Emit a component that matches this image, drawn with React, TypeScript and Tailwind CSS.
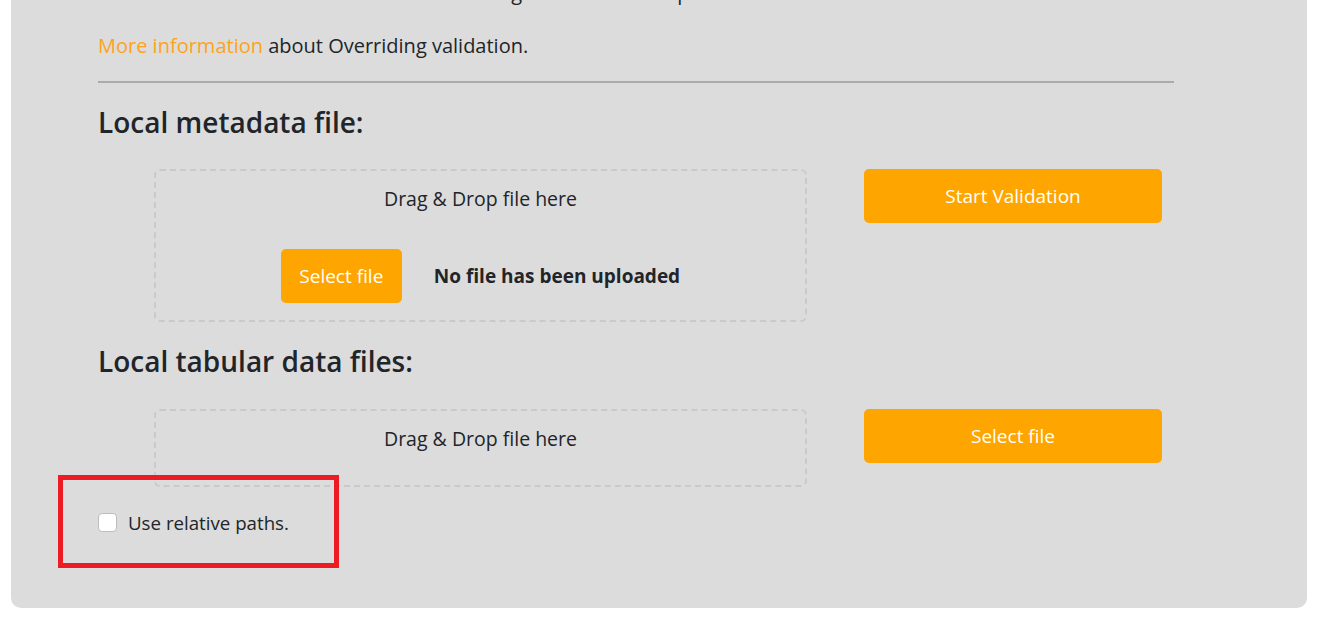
export default function App() {
  return (
    <div className="relative min-h-[618px] overflow-hidden bg-white font-['Open_Sans',sans-serif] text-[#212529]">
      <div className="ml-[11px] mr-[17px] -mt-[22px] rounded-[10px] bg-[#dcdcdc] pb-[72px] pl-[87px]">
        <p className="whitespace-nowrap text-[20px] leading-[30px]">
          Note that all of the validation checks will be ignored and the input is stored.
        </p>
        <p className="mt-[23px] text-[20px] leading-[30px]">
          <a className="text-[#ffa31a]">More information</a> about Overriding validation.
        </p>
        <hr className="mt-[20px] w-[1076px] border-0 border-t-2 border-[#ababab]" />
        <h3 className="mt-[22px] text-[28px] font-semibold leading-[34px]">Local metadata file:</h3>
        <div className="mt-[30px] flex items-start">
          <div className="ml-[56px] flex h-[153px] w-[653px] flex-col items-center rounded-[6px] border-2 border-dashed border-[#cacaca] pt-[14px]">
            <p className="text-[19.5px] leading-[27px]">Drag &amp; Drop file here</p>
            <div className="mt-[37px] flex items-center">
              <button className="h-[54px] w-[121px] rounded-[5px] bg-[#ffa500] text-[19px] text-white">
                Select file
              </button>
              <span className="ml-[32px] text-[19px] font-bold">No file has been uploaded</span>
            </div>
          </div>
          <button className="ml-[57px] h-[54px] w-[298px] rounded-[5px] bg-[#ffa500] text-[19px] text-white">
            Start Validation
          </button>
        </div>
        <h3 className="mt-[22px] text-[28px] font-semibold leading-[34px]">Local tabular data files:</h3>
        <div className="mt-[31px] flex items-start">
          <div className="ml-[56px] flex h-[78px] w-[653px] flex-col items-center rounded-[6px] border-2 border-dashed border-[#cacaca] pt-[14px]">
            <p className="text-[19.5px] leading-[27px]">Drag &amp; Drop file here</p>
          </div>
          <button className="ml-[57px] h-[54px] w-[298px] rounded-[5px] bg-[#ffa500] text-[19px] text-white">
            Select file
          </button>
        </div>
        <label className="mt-[22px] flex h-[27px] items-center">
          <input
            type="checkbox"
            className="h-[19px] w-[19px] appearance-none rounded-[4px] border border-[#bdbdbd] bg-white"
          />
          <span className="ml-[11px] text-[18.7px] leading-[27px]">Use relative paths.</span>
        </label>
      </div>
      <div className="pointer-events-none absolute left-[58px] top-[475px] h-[93px] w-[281px] border-[5px] border-[#ed1c24]" />
    </div>
  );
}
